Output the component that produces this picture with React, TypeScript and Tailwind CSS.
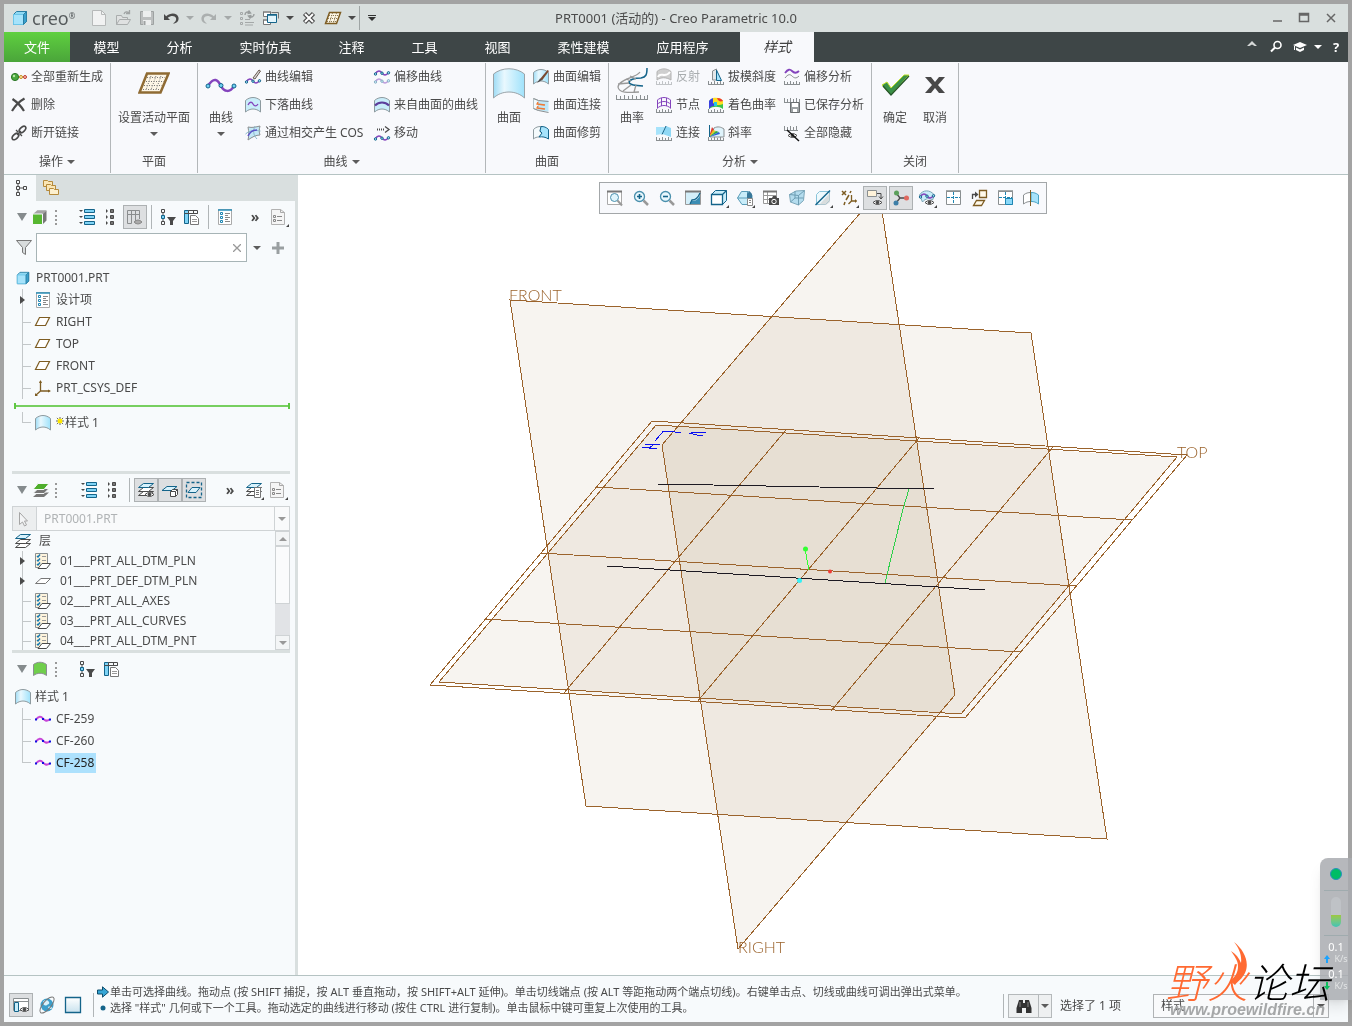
import type { ReactNode } from 'react';

const INK = '#4a4a4a';
const BLUE = '#14648a';
const SKY = '#a6e3fb';
const PURPLE = '#8444bd';
const BROWN = '#7d5c22';
const GRAY = '#8a8f91';
const DATUM = '#9b632c';

const Ruler = ({ y = 15 }: { y?: number }) => (
  <path d={`M0 ${y + 0.5}h16M.5 ${y}v-3M3.5 ${y}v-2M6.5 ${y}v-3M9.5 ${y}v-2M12.5 ${y}v-3M15.5 ${y}v-2`} stroke={GRAY} />
);

const Wave = ({ y = 0, color = PURPLE, dot = BLUE }: { y?: number; color?: string; dot?: string }) => (
  <g transform={`translate(0 ${y})`}>
    <path d="M1 4C4 0 6 .5 8 3S12 6 15 2" stroke={color} strokeWidth="1.5" />
    <circle cx="1.5" cy="4" r="1.2" fill={SKY} stroke={dot} />
    <circle cx="8" cy="3.2" r="1.2" fill={SKY} stroke={dot} />
    <circle cx="14.5" cy="2.8" r="1.2" fill={SKY} stroke={dot} />
  </g>
);

const Patch = ({ fill = SKY, stroke = '#8d9a9f' }: { fill?: string; stroke?: string }) => (
  <path d="M.5 3.5C5-.5 11-.5 15.5 3.5V15C11 11 5 11 .5 15Z" fill={fill} stroke={stroke} />
);

const Eye = ({ x = 6, y = 9 }: { x?: number; y?: number }) => (
  <g transform={`translate(${x} ${y})`}>
    <path d="M0 3.5Q4.5-.5 9 3.5Q4.5 7.5 0 3.5Z" fill="#fff" stroke={INK} />
    <circle cx="4.5" cy="3.5" r="1.8" fill={INK} />
  </g>
);

const Lens = ({ children }: { children?: ReactNode }) => (
  <>
    <path d="M10.5 10.5l4.5 4.5" stroke="#999" strokeWidth="2.5" />
    <circle cx="6.5" cy="6.5" r="5" fill="#e8f7fd" stroke="#4a90ad" strokeWidth="1.3" />
    {children}
  </>
);

const Layer = ({ y, fill = '#fff', stroke = INK }: { y: number; fill?: string; stroke?: string }) => (
  <path d={`M5.5 ${y}h10l-5 4h-10z`} fill={fill} stroke={stroke} />
);

const icons: Record<string, ReactNode> = {
  part: (
    <>
      <path d="M1.5 4.5l3-3h10v10l-3 3h-10z" fill="#8fd8f3" stroke="#2a7fa5" />
      <path d="M1.5 4.5h10v10h-10z" fill={SKY} stroke="#6cc5e8" />
      <path d="M11.5 4.5l3-3v10l-3 3z" fill="#3aa0cc" stroke="#2a7fa5" />
    </>
  ),
  file: (
    <>
      <path d="M1.5.5h9l4 4v11h-13z" fill="#f1f2f2" stroke="#b6b9b9" />
      <path d="M10.5.5v4h4" stroke="#b6b9b9" />
    </>
  ),
  open: (
    <>
      <path d="M1.5 14.5v-9h5l1 2h5v2M1.5 14.5l3-5h11l-3 5z" fill="#dfe1e1" stroke="#a9adad" />
      <path d="M9 4c1-2.5 3-2.5 5-1.5M14.5 0v3.5h-3.5" stroke="#a0a4a4" strokeWidth="1.3" />
    </>
  ),
  save: (
    <>
      <path d="M1.5 1.5h13v13h-13z" fill="#bcbfbf" stroke="#9ea2a2" />
      <path d="M4 1h8v6H4zM4 10h8v5H4z" fill="#eceeee" />
      <path d="M5.5 11v4" stroke="#9ea2a2" strokeWidth="2" />
    </>
  ),
  undo: <path d="M1 4v6h6L4.8 7.8C8 5 12 5.5 13 8c.6 2-.5 4-3 5.5 4 0 6-2.5 5.5-6C14.5 3 8 2 3.2 6.2z" fill={INK} />,
  redo: <path d="M15 4v6H9l2.2-2.2C8 5 4 5.5 3 8c-.6 2 .5 4 3 5.5-4 0-6-2.5-5.5-6C1.5 3 8 2 12.8 6.2z" fill="#abafaf" />,
  regen: (
    <>
      <path d="M1.5 2.5h2v2h-2zM1.5 7.5h2v2h-2zM1.5 12.5h2v2h-2zM6 9.5h5M6 12.5h9M6 15h8" stroke="#a4a8a8" />
      <path d="M6 5c0-3 3-4 5-2M9.5.5l2 2.5-3 .5M15 4c0 3-3 4-5 2M11.5 8.5L9.5 6l3-.5" stroke="#999d9d" strokeWidth="1.4" />
    </>
  ),
  windows: (
    <>
      <path d="M.5 1.5h7v5h-7zM.5 9.5h7v5h-7z" fill="#fff" stroke="#777" />
      <path d="M1 2h6M1 10h6" stroke="#999" strokeWidth="2" />
      <path d="M8.5 2.5h7v6" stroke="#777" />
      <path d="M4.5 4.5h9v8h-9z" fill="#e3f5fc" stroke={BLUE} />
      <path d="M4 5h10" stroke={BLUE} strokeWidth="1.5" />
    </>
  ),
  closeWin: (
    <>
      <path d="M3.5 3.5l9 9M12.5 3.5l-9 9" stroke={INK} strokeWidth="4.5" />
      <path d="M4 4l8 8M12 4l-8 8" stroke="#fff" strokeWidth="2" />
    </>
  ),
  plane: (
    <>
      <path d="M4.5 2.5h11l-4 11h-11z" fill="#fdf6e6" stroke={BROWN} strokeWidth="1.5" />
      <path d="M4 5.5h10M3 8.5h10M2 11.5h10M7.5 3l-3 10M11.5 3l-3 10" stroke="#8b7a55" strokeDasharray="1 1" />
    </>
  ),
  regenAll: (
    <>
      <circle cx="4" cy="8" r="3.6" fill="#4ba83f" stroke="#2b7626" />
      <circle cx="3" cy="7" r="1.2" fill="#b8e8a8" />
      <circle cx="10" cy="8" r="1.5" fill="#fff2b0" stroke="#c38b20" />
      <circle cx="14" cy="8" r="1.5" fill="#f8c3ba" stroke="#c0392b" />
    </>
  ),
  del: <path d="M1.5 2C6 5 10 9 13 14M13.5 1.5C9 4 4 9 1 14" stroke={INK} strokeWidth="2.2" />,
  unlink: (
    <>
      <ellipse cx="4.5" cy="11.5" rx="4" ry="2.3" transform="rotate(-45 4.5 11.5)" stroke={INK} strokeWidth="1.6" />
      <ellipse cx="11.5" cy="4.5" rx="4" ry="2.3" transform="rotate(-45 11.5 4.5)" stroke={INK} strokeWidth="1.6" />
      <path d="M6 10l4-4M5 5l2 2M9 9l2 2" stroke={INK} strokeWidth="1.3" />
    </>
  ),
  curveEdit: (
    <>
      <Wave y={9} />
      <path d="M8 9l6-8 1.5 1L10 10z" fill="#d8d8d8" stroke="#6a5a50" />
    </>
  ),
  drop: (
    <>
      <Patch fill="#c9edfa" />
      <path d="M3 8c2-4 4-3 5-1s3 3 5 0" stroke={PURPLE} strokeWidth="1.3" />
    </>
  ),
  cos: (
    <>
      <path d="M3 2c4 1 8 0 12-1-1 4-1 6 0 9-4 0-8 2-12 5 1-4 1-8 0-13z" fill="#c3e8f6" stroke={GRAY} />
      <path d="M.5 9C5 5 10 5 15.500 6M10 1c-2 4-2 9 2 13" stroke="#8bb8ca" />
      <path d="M3 11c2-4 5-6 9-6" stroke="#5b52c8" strokeWidth="1.5" />
    </>
  ),
  offset: (
    <>
      <Wave y={1} />
      <g opacity=".5"><Wave y={9} /></g>
    </>
  ),
  fromSurf: (
    <>
      <Patch fill="#c9edfa" />
      <path d="M1 8.5c4-4 10-4 14 0" stroke="#5d3f9c" strokeWidth="2" />
    </>
  ),
  move: (
    <>
      <Wave y={10} />
      <path d="M3 4.5h8" stroke={INK} strokeWidth="2" strokeDasharray="1 1" />
      <path d="M11 1.5l4 3-4 3" stroke={INK} strokeWidth="1.3" />
    </>
  ),
  surfEdit: (
    <>
      <Patch fill="url(#surfFill)" />
      <path d="M7 10l7.5-9L16 2 9 11.5z" fill="#7a4a30" />
      <path d="M4 14l3-4.5 2 1.5z" fill={INK} />
    </>
  ),
  surfConn: (
    <>
      <path d="M.5 1.5l5 2v10l-5-2z" fill="#f1fafd" stroke="#b5c2c6" />
      <path d="M5.5 3.5h10v11l-10-1z" fill="#bfe8f8" />
      <path d="M4 7l8 1M4 11l8 1M5 5l-1 2 7 1M5 9l-1 2 7 1" stroke="#ef7a35" strokeWidth="1.3" />
      <path d="M.5 1.5l5 2 10 1M.5 11.5l5 2 10 2" stroke={GRAY} />
    </>
  ),
  surfTrim: (
    <>
      <path d="M.5 4.5C3 2 5 1.5 8 1.5l-1 5 2 2-3 3.5c-2 0-4 .5-5.5 2z" fill="#f4fafc" stroke="#8d9a9f" />
      <path d="M8 1.5c3 0 5 .5 7.5 3V14c-3-2-6-2.5-9.5-2l3-4-2-2z" fill={SKY} stroke={BLUE} />
    </>
  ),
  reflect: (
    <>
      <path d="M1 2.5C5-1 11-1 15 2.5V11C10 8 5 8 1 11Z" fill="#cfcfcf" stroke="#b2b2b2" />
      <path d="M2 8c2-6 7 2 12-5" stroke="#fff" strokeWidth="2" />
      <g opacity=".5"><Ruler /></g>
    </>
  ),
  knot: (
    <>
      <path d="M1 3.5c4-4 10-4 14 0M1 7.5c4-4 10-4 14 0M1 11.5c4-4 10-4 14 0M1.5 3v8M5.5 1v8M10.5 1v8M14.5 3v8" stroke={PURPLE} />
      <Ruler />
    </>
  ),
  connect: (
    <>
      <path d="M0 2h9L6 9l-6 1z" fill={SKY} />
      <path d="M10 1l5 2v9L6.5 9z" fill="#8fd8f5" />
      <path d="M10 1L6 9.5" stroke={BLUE} />
      <Ruler />
    </>
  ),
  draft: (
    <>
      <path d="M4.5 11V2l4-2v11z" fill="#e3e7e9" stroke={GRAY} />
      <path d="M8.5 1l5 10.5h-5z" fill={SKY} stroke={BLUE} />
      <Ruler />
    </>
  ),
  shaded: (
    <>
      <path d="M1 4C5 0 11 0 15 4v8C11 9 5 9 1 12z" fill="#3cc24a" />
      <path d="M1 4c1.5-2 3-3 5-3v8c-2 0-4 1-5 3z" fill="#3a3fe0" />
      <path d="M5 1c4-1 8 0 10 3v3c-4 2-7 1-10-1z" fill="#ffdf20" />
      <path d="M9 1c3 0 5 1 6 3-3 1-5 0-6-3z" fill="#ef3b2d" />
      <path d="M6 5h3v4H6z" fill="#25c8e0" />
      <Ruler />
    </>
  ),
  slope: (
    <>
      <path d="M2 12L6 3c4-2 7-1 10 1v8z" fill="#dff3fb" stroke={GRAY} />
      <path d="M1 12L4 2l2 3z" fill="#e0382c" />
      <path d="M1 12l4-7 3 1z" fill="#e8c520" />
      <path d="M1 12l7-6 3 1z" fill="#2ba84a" />
      <path d="M1 12l10-5 1 2z" fill="#2b60d8" />
      <path d="M1.5 0v12" stroke={BLUE} />
      <Ruler />
    </>
  ),
  offAna: (
    <>
      <path d="M1 4c3-4 5-4 7-2s4 3 7 0" stroke={PURPLE} strokeWidth="1.8" />
      <path d="M1 9c3-4 5-4 7-2s4 3 7 0" stroke={GRAY} />
      <Ruler />
    </>
  ),
  savedAna: (
    <>
      <path d="M.5 1v4M3.5 2v3M6.5 1v4M9.5 2v3M12.5 1v4M15.5 2v3M0 5.5h7" stroke={GRAY} />
      <path d="M6.5 5.5h9v10h-9z" fill="#9ba0a2" stroke="#696d6f" />
      <path d="M8 6h6v4H8zM9 12h4v3H9z" fill="#fff" />
    </>
  ),
  hideAll: (
    <>
      <path d="M.5 1v4M3.5 2v3M6.5 1v4M9.5 2v3M12.5 1v4M0 5.5h14" stroke={GRAY} />
      <Eye x={4} y={7} />
      <path d="M3 5l12 11" stroke="#111" strokeWidth="1.5" />
    </>
  ),
  // view toolbar
  refit: (
    <>
      <path d="M.5 1.5h14v13H.5z" fill="#fff" stroke="#aaa" />
      <path d="M0 1.5h15" stroke="#777" strokeWidth="2" />
      <circle cx="7.5" cy="7.5" r="4" fill="#e0f5fc" stroke="#4a90ad" />
      <path d="M10.5 10.5l4.5 5" stroke="#999" strokeWidth="2" />
    </>
  ),
  zoomIn: <Lens><path d="M4 6.5h5M6.5 4v5" stroke={BLUE} strokeWidth="1.6" /></Lens>,
  zoomOut: <Lens><path d="M4 6.5h5" stroke={BLUE} strokeWidth="1.6" /></Lens>,
  repaint: (
    <>
      <path d="M.5 1.5h15v13H.5z" fill="#d3eef9" stroke="#999" />
      <path d="M15 5C13 10 10 11 7 11l-2 3h10z" fill="#3b8db4" />
      <path d="M15 3c-2 5-4 7-8 7l-2 4" stroke={BLUE} strokeWidth="1.3" />
      <path d="M0 1.5h16" stroke="#777" strokeWidth="2" />
    </>
  ),
  box: (
    <>
      <path d="M.5 4.5l4-4h11v10l-4 4H.5z" fill="#c9edfa" stroke={BLUE} />
      <path d="M.5 4.5h11v10H.5zM11.5 4.5l4-4" fill="#fff" stroke={BLUE} strokeWidth="1.3" />
    </>
  ),
  saved: (
    <>
      <path d="M.5 8l4-6.5h7l3.5 4v5l-3 4h-7z" fill="#c8ecf9" stroke="#5a9cb8" />
      <path d="M.5 8h10M10.5 2v10" stroke="#5a9cb8" />
      <path d="M10 8V4l2.5-3L15 4v4z" fill="#38789a" />
      <path d="M10.5 8.5h5v7h-5z" fill="#fff" stroke="#888" />
      <path d="M12 10.5h2M12 12.5h2" stroke="#888" />
    </>
  ),
  viewMgr: (
    <>
      <path d="M.5 1.5h13v12H.5zM.5 5.5h13M.5 9.5h13M4.5 1.5v12" fill="#fff" stroke="#999" />
      <path d="M0 1.5h14" stroke="#777" strokeWidth="2" />
      <path d="M6 8h3l1-2h3l1 2h2v7H6z" fill={INK} />
      <circle cx="11" cy="11.5" r="2.2" fill={INK} stroke="#fff" />
    </>
  ),
  persp: (
    <>
      <path d="M.5 4.5L7 1l8.5-.5-1 10-5 4.5-8-3z" fill="#b4dcee" stroke="#7ba6b9" />
      <path d="M.5 4.5l9 1 6-5M9.5 5.5V15M1.5 12L6 8h8.5M6 8V1" stroke="#6d9db3" />
    </>
  ),
  section: (
    <>
      <path d="M1.5 4.5l3-3h10v9l-4 4h-9z" fill="#eef9fd" stroke="#8ac4da" />
      <path d="M4 15L15 3v9l-4 3z" fill="#c9c9c9" opacity=".6" />
      <path d="M.5 15L15 .5" stroke={BLUE} strokeWidth="1.5" />
    </>
  ),
  datums: (
    <>
      <path d="M1 1l4 4M5 1L1 5M10 1l-1 2M8 5L5 10M4 12l-1 3" stroke={BROWN} strokeWidth="1.5" />
      <path d="M10.5 5v6h5M10.5 11l-3 3" stroke={BROWN} strokeWidth="1.3" />
      <path d="M14 9l2 2-2 2z" fill={BROWN} />
    </>
  ),
  annot: (
    <>
      <path d="M.5.5h9v6h-9z" fill="#fff3da" stroke={GRAY} />
      <path d="M10 3.5h4v5M12 6.5l2 2.5 2-2.5" stroke={INK} />
      <Eye x={6} y={9} />
    </>
  ),
  spin: (
    <>
      <path d="M3.5 3.5L7 8l-4 5M7 8h6" stroke={INK} strokeWidth="1.3" />
      <circle cx="3.5" cy="3" r="2.5" fill="#5ba05b" />
      <circle cx="3" cy="13" r="2.5" fill="#3d7fa8" />
      <circle cx="13.5" cy="8" r="2.5" fill="#e06a60" />
    </>
  ),
  styleDisp: (
    <>
      <path d="M.5 5C4-.5 11-.5 15.500 5l-2 5c-3-2-7-2-10 2z" fill="#c9edfa" stroke="#7aa5b7" />
      <Wave y={3} />
      <Eye x={6} y={9} />
    </>
  ),
  quad: (
    <>
      <path d="M1.5 1.5h14v13h-14z" fill="#fff" stroke={GRAY} />
      <path d="M1 1h15" stroke={GRAY} strokeWidth="1.5" />
      <path d="M8.5 2v12M2 7.5h13" stroke="#1e86b3" strokeDasharray="3 1" />
    </>
  ),
  orient: (
    <>
      <path d="M8.5.5h7v7h-7zM5.5 10.5h8l-3 5h-8z" fill="#fff9ea" stroke={BROWN} strokeWidth="1.3" />
      <path d="M1.5 9V4.5h4" stroke={INK} strokeWidth="1.3" />
      <path d="M4 1.5l3.5 3L4 7.5z" fill={INK} />
    </>
  ),
  quadOne: (
    <>
      <path d="M1.5 1.5h14v13h-14z" fill="#fff" stroke={GRAY} />
      <path d="M1 1h15" stroke={GRAY} strokeWidth="1.5" />
      <path d="M8.5 2v12M2 7.5h13" stroke="#1e86b3" strokeDasharray="3 1" />
      <path d="M8.5 8.5h7v6h-7z" fill="#8ad8f8" stroke="#1e86b3" />
    </>
  ),
  symm: (
    <>
      <path d="M.5 5C3 3 5 2.5 8 2.5v9c-3 0-5 .5-7.5 2.5z" fill="#fff" stroke={GRAY} />
      <path d="M8 2.5c3 0 5 .5 7.5 2.5v9c-2.5-2-4.5-2.5-7.5-2.5z" fill={SKY} stroke="#4aa3c4" />
      <path d="M7.5 0v16" stroke={BROWN} />
    </>
  ),
  // panels
  treeTab: <path d="M4.5.5h3v3h-3zM4.5 6.5h3v3h-3zM4.5 12.5h3v3h-3zM11.5 6.5h3v3h-3zM6 3.5v3M6 9.5v3M7.5 8h4" stroke={INK} />,
  folders: (
    <>
      <path d="M.5.5h4l1 1h4v5h-9z" fill="#fbe6b4" stroke="#b58a3c" />
      <path d="M3.5 4.5h4l1 1h4v5h-9z" fill="#fbe6b4" stroke="#b58a3c" />
      <path d="M6.5 8.500h4l1 1h4v5h-9z" fill="#fdf0cf" stroke="#b58a3c" />
    </>
  ),
  greenPart: (
    <>
      <path d="M3.5 1.5h10v10l-4 4v-10z" fill="#777" />
      <path d="M3.5 2h10l-4 3.5H-.5z" fill="#a5a5a5" />
      <path d="M-.5 5H9.500v10.5H-.5z" fill="#57b731" stroke="#f7fafc" />
    </>
  ),
  list: (
    <>
      <path d="M0 1h4L2 3zM0 7h4L2 9zM0 13h4l-2 2z" fill={INK} />
      <path d="M5.5.5h10v3h-10zM5.5 6.5h10v3h-10zM5.5 12.5h10v3h-10z" fill="#7fd3f5" stroke={BLUE} />
    </>
  ),
  listSmall: (
    <>
      <path d="M3 0l2 2-2 2zM3 6l2 2-2 2zM3 12l2 2-2 2z" fill={INK} />
      <path d="M7.5.5h3v3h-3zM7.5 6.5h3v3h-3zM7.5 12.5h3v3h-3z" fill="#777" stroke={INK} />
    </>
  ),
  tableEye: (
    <>
      <path d="M.5 1.5h12v4H.5zM.5 5.5h4v9h-4zM4.5 1.5v4M8.5 1.5v13M12.5 5v5" stroke="#8a8d8e" />
      <path d="M7 13q4-4 8 0-4 4-8 0z" fill="#aaa" stroke="#888" />
    </>
  ),
  treeFilter: (
    <>
      <path d="M1.5.5h3v3h-3zM1.5 12.5h3v3h-3zM3 3.5v3M3 9.5v3" stroke={INK} />
      <path d="M1.5 6.5h3v3h-3z" fill="#7fd3f5" stroke={BLUE} />
      <path d="M7 8h9l-3 4v4h-3v-4z" fill={INK} />
    </>
  ),
  tableCols: (
    <>
      <path d="M.5 1.5h4v13h-4z" fill="#7fd3f5" stroke={BLUE} />
      <path d="M4.5 1.5h9v3h-9zM9.5 1.5v3M.5 4.5h13" stroke={INK} />
      <path d="M6.5 6.5h5l3 3v6h-8z" fill="#fff" stroke="#777" />
      <path d="M8 10.5h5M8 12.5h5" stroke="#999" />
    </>
  ),
  design: (
    <>
      <path d="M1.5.5h13v15h-13z" fill="#fff" stroke="#aaa" />
      <path d="M1 1h14" stroke="#2a8fb8" strokeWidth="1.5" />
      <path d="M3.5 3.5h2v2h-2zM3.5 7.5h2v2h-2zM3.5 11.5h2v2h-2z" stroke="#1e86b3" />
      <path d="M8 4.5h5M8 6.5h3M8 8.5h5M8 10.5h3M8 12.5h5" stroke="#888" />
    </>
  ),
  sheet: (
    <>
      <path d="M.5.5h9l4 3v12H.5z" fill="#f5f5f5" stroke="#b2b2b2" />
      <path d="M9.5.5v3h4" stroke="#a9a9a9" />
      <path d="M6 7.5h5M6 11.5h5" stroke="#888" />
      <path d="M2.5 6.5h2v2h-2zM2.5 10.5h2v2h-2z" stroke="#888" />
    </>
  ),
  funnel: <path d="M.5.5h15l-6 7v7l-3-2v-5z" fill="#d8dcdd" stroke="#777" />,
  datum: <path d="M4.5 3.5h10l-4 8H.5z" fill="#fff" stroke={BROWN} strokeWidth="1.2" />,
  csys: (
    <>
      <path d="M5.5 1v10h9M5.5 11L1 15" stroke={BROWN} strokeWidth="1.3" />
      <path d="M4 3l1.5-3L7 3zM13 9.5l3 1.5-3 1.5zM0 16v-3l3 3z" fill={BROWN} />
    </>
  ),
  surf: <Patch fill="url(#surfFill)" />,
  greenSurf: <path d="M.5 3.5c4-3 9-3 13 0v11c-4-3-9-3-13 0z" fill="#6fce4c" stroke={GRAY} />,
  greenLayers: (
    <>
      <path d="M5 10.5h11l-5 4.5H0z" fill="#777" />
      <path d="M5 6.5h11l-5 5H0z" fill="#777" stroke="#f6f9fa" />
      <path d="M5 1.5h11l-5 6H0z" fill="#4fae2c" stroke="#f6f9fa" />
    </>
  ),
  layers: (
    <>
      <Layer y={10.5} />
      <Layer y={6.5} />
      <Layer y={1.5} fill="#d8f2fc" stroke={BLUE} />
    </>
  ),
  layersEye: (
    <>
      <Layer y={9.5} />
      <Layer y={5.5} />
      <Layer y={1.5} fill="#d8f2fc" stroke={BLUE} />
      <Eye x={7} y={9} />
    </>
  ),
  layerBox: (
    <>
      <path d="M5 4.5h10l-5 4H0z" fill="#d8f2fc" stroke={BLUE} />
      <path d="M8.5 9.5l2-2h5v5l-2 2h-5zM8.5 9.5h5v5M13.5 9.5l2-2" fill="#fff" stroke={INK} />
    </>
  ),
  layerSel: (
    <>
      <path d="M.5.5h15v15H.5z" stroke={BLUE} strokeWidth="1.3" strokeDasharray="3 2" />
      <path d="M6 5.5h8l-4 5H2z" fill="#d8f2fc" stroke={BLUE} />
    </>
  ),
  layersDoc: (
    <>
      <Layer y={9.5} />
      <Layer y={5.5} />
      <Layer y={1.5} fill="#d8f2fc" stroke={BLUE} />
      <path d="M8.5 5.5h6v10h-6z" fill="#fff" stroke="#777" />
      <path d="M10 8.5h3M10 10.5h3M10 12.5h3" stroke="#777" />
    </>
  ),
  cursor: <path d="M2.5 1.5v12l3-2.5 2 4 2-1-2-4h3z" fill="#f3f4f5" stroke="#a5a5a5" />,
  layerItem: (
    <>
      <path d="M.5.5h12v14H.5z" fill="#fdf3dc" stroke={GRAY} />
      <path d="M2 3l1 1 2-2.5M2 7l1 1 2-2.5M2 11l1 1 2-2.5" stroke="#1578b0" strokeWidth="1.5" />
      <path d="M7 3.5h4M7 7.5h4" stroke="#999" />
      <path d="M7 10.5h8.5l-4 5H3z" fill="#fff" stroke={INK} />
    </>
  ),
  layerFlat: <path d="M6 5.5h9.5l-5 5H.5z" fill="#fff" stroke="#777" />,
  curveItem: (
    <>
      <path d="M1 8.5C3.500 5 6 5 8 7.5s4 3 6.5 1" stroke="#c646d8" strokeWidth="2" />
      <path d="M0 7.500h2v2H0zM7 7h2v2H7zM14 7.500h2v2h-2z" fill="#1010e0" />
    </>
  ),
  panelEye: (
    <>
      <path d="M.5 1.5h15v12H.5z" fill="#fff" stroke={GRAY} />
      <path d="M1 4.5h14" stroke={GRAY} />
      <path d="M1.5 5.5h4v9h-4z" fill="#c9edfa" stroke={BLUE} />
      <Eye x={7} y={9} />
    </>
  ),
  globe: (
    <>
      <circle cx="8" cy="8" r="6.5" fill="#3b9fcb" />
      <path d="M4 5c2-3 5-2 6 0s-1 2-2 3-4 1-4-3zM9 10c2-1 4 0 4 1s-3 2-4-1z" fill="#d9f2fb" />
      <ellipse cx="8" cy="8" rx="10" ry="4" transform="rotate(-50 8 8)" stroke="#777" />
    </>
  ),
  blank: <path d="M.5.5h15v15H.5z" fill="url(#blankFill)" stroke={BLUE} strokeWidth="1.3" />,
  binoc: (
    <>
      <path d="M3 2h4v3h2V2h4l2.5 8v5H10v-5H6v5H.5v-5z" fill="#333" />
      <path d="M4 4v5M12 4v5" stroke="#888" />
    </>
  ),
  search: (
    <>
      <circle cx="9.5" cy="6" r="3.5" stroke="#fff" strokeWidth="1.6" />
      <path d="M7 8.5l-4 4" stroke="#fff" strokeWidth="2" />
    </>
  ),
  learn: (
    <>
      <path d="M1 6L8 3l7 3-7 3z" fill="#fff" />
      <path d="M4 8.5V11l4 2 4-2V8.5L8 10.5z" fill="#fff" />
      <path d="M2.5 7v4" stroke="#fff" />
    </>
  ),
};

const Icon = ({ name, className = 'size-4' }: { name: string; className?: string }) => (
  <svg viewBox="0 0 16 16" fill="none" className={`${className} shrink-0 overflow-visible`} aria-hidden="true">
    {icons[name]}
  </svg>
);

const Caret = ({ className = 'text-[#5c5c5c]' }: { className?: string }) => (
  <svg viewBox="0 0 8 4" className={`h-1 w-2 shrink-0 ${className}`} aria-hidden="true">
    <path d="M0 0h8L4 4z" fill="currentColor" />
  </svg>
);

const Tool = ({ name, label, on = false, corner = false }: { name: string; label: string; on?: boolean; corner?: boolean }) => (
  <button
    type="button"
    aria-label={label}
    className={`relative flex h-6 w-6 shrink-0 items-center justify-center ${on ? 'border border-[#adb1b3] bg-[#dddfe1]' : ''}`}
  >
    <Icon name={name} />
    {corner && (
      <svg viewBox="0 0 3 3" className="absolute right-0.5 bottom-0.5 size-[3px]" aria-hidden="true">
        <path d="M3 0v3H0z" fill="#444" />
      </svg>
    )}
  </button>
);

/* ---------- Title bar ---------- */

const QuickCaret = ({ label, dim = false }: { label: string; dim?: boolean }) => (
  <button type="button" aria-label={label} className="flex h-6 w-[14px] items-center justify-center">
    <Caret className={dim ? 'text-[#a5a9a9]' : 'text-[#4a4a4a]'} />
  </button>
);

const TitleBar = () => (
  <header className="grid h-7 shrink-0 grid-cols-[1fr_auto_1fr] items-center bg-[#d9dfde]">
    <div className="flex items-center">
      <div className="flex w-[83px] items-center gap-1 pl-2">
        <Icon name="part" />
        <span className="flex text-lg leading-6 text-[#565b5d]">
          creo<span className="text-[8px] leading-5">®</span>
        </span>
      </div>
      <Tool name="file" label="新建" />
      <Tool name="open" label="打开" />
      <Tool name="save" label="保存" />
      <Tool name="undo" label="撤消" />
      <QuickCaret label="撤消列表" dim />
      <Tool name="redo" label="重做" />
      <QuickCaret label="重做列表" dim />
      <Tool name="regen" label="重新生成" />
      <Tool name="windows" label="窗口" />
      <QuickCaret label="窗口列表" />
      <Tool name="closeWin" label="关闭窗口" />
      <Tool name="plane" label="活动平面" />
      <QuickCaret label="活动平面列表" />
      <span className="h-6 w-px bg-[#9fa5a5]" />
      <button type="button" aria-label="自定义" className="flex h-6 w-6 flex-col items-center justify-center gap-px">
        <span className="h-px w-2 bg-[#333]" />
        <Caret className="text-[#333]" />
      </button>
    </div>
    <h1 className="text-[13px] leading-5 text-[#4b4b4b]">PRT0001 (活动的) - Creo Parametric 10.0</h1>
    <div className="flex items-center justify-end pr-1">
      {[
        { label: '最小化', d: 'M4 11h9' },
        { label: '最大化', d: 'M3.5 3.5h9v8h-9zM3.5 5h9' },
        { label: '关闭', d: 'M4 4l8 8M12 4l-8 8' },
      ].map((b) => (
        <button key={b.label} type="button" aria-label={b.label} className="flex w-[27px] justify-center">
          <svg viewBox="0 0 16 16" className="size-4" fill="none" stroke="#666" strokeWidth="1.5" aria-hidden="true">
            <path d={b.d} />
          </svg>
        </button>
      ))}
    </div>
  </header>
);

/* ---------- Ribbon ---------- */

const tabs = ['模型', '分析', '实时仿真', '注释', '工具', '视图', '柔性建模', '应用程序'];

const TabBar = () => (
  <nav className="flex h-[30px] shrink-0 items-stretch bg-[#3e4647] text-[13px] leading-5 text-white">
    <button type="button" className="w-[66px] bg-linear-to-b from-[#5fd03f] to-[#4aa53a]">文件</button>
    {tabs.map((t) => (
      <button key={t} type="button" className={t.length > 2 ? 'w-[99px]' : 'w-[73px]'}>
        {t}
      </button>
    ))}
    <button type="button" className="ml-2 w-[74px] bg-[#f8f9fc] text-sm text-[#444] italic">样式</button>
    <div className="ml-auto flex items-center">
      <button type="button" aria-label="折叠功能区" className="flex h-5 w-6 justify-center pt-1">
        <svg viewBox="0 0 10 6" className="h-1.5 w-[10px]" aria-hidden="true">
          <path d="M5 0l5 5H7.500L5 3.500 2.500 5H0z" fill="#d5d8d8" />
        </svg>
      </button>
      <Tool name="search" label="搜索" />
      <Tool name="learn" label="学习" />
      <button type="button" aria-label="学习列表" className="flex w-3 justify-center">
        <Caret className="text-white" />
      </button>
      <button type="button" className="w-6 font-bold">?</button>
    </div>
  </nav>
);

const Group = ({ label, menu = false, className, children }: { label: string; menu?: boolean; className: string; children: ReactNode }) => (
  <section className={`my-px flex shrink-0 flex-col border-r border-[#b3b7b9] ${className}`}>
    <div className="flex h-[84px]">{children}</div>
    <div className="flex flex-1 items-center justify-center gap-1 pt-1">
      {label}
      {menu && <Caret />}
    </div>
  </section>
);

const Column = ({ items, className = '' }: { items: [string, string, boolean?][]; className?: string }) => (
  <div className={`flex shrink-0 flex-col ${className}`}>
    {items.map(([icon, text, off]) => (
      <button
        key={text}
        type="button"
        disabled={off}
        className={`flex h-7 items-center gap-1 whitespace-nowrap ${off ? 'text-[#a9adaf]' : ''}`}
      >
        <Icon name={icon} />
        {text}
      </button>
    ))}
  </div>
);

const Big = ({ label, menu = false, className, children }: { label: string; menu?: boolean; className: string; children: ReactNode }) => (
  <button type="button" className={`flex shrink-0 flex-col items-center pt-[5px] ${className}`}>
    <svg viewBox="0 0 32 32" fill="none" className="size-8" aria-hidden="true">
      {children}
    </svg>
    <span className="mt-2 mb-1 leading-5 whitespace-nowrap">{label}</span>
    {menu && <Caret />}
  </button>
);

const Ribbon = () => (
  <div className="flex h-[113px] shrink-0 overflow-hidden border-b border-[#b5c3c3] bg-[#f8f9fc]">
    <Group label="操作" menu className="w-[107px]">
      <Column className="pl-[7px]" items={[['regenAll', '全部重新生成'], ['del', '删除'], ['unlink', '断开链接']]} />
    </Group>
    <Group label="平面" className="w-[87px]">
      <Big label="设置活动平面" menu className="w-full">
        <path d="M9 5.5h21.5l-8 19H1.5z" fill="#fdf6e6" stroke="#8f6b33" strokeWidth="2.5" />
        <path d="M9 9.5h18M8 13.5h18M6 17.5h18M5 21.5h17M13 8l-5 14M18 8l-5 14M23 8l-5 14" stroke="#777" strokeDasharray="1 1.5" />
      </Big>
    </Group>
    <Group label="曲线" menu className="w-[288px]">
      <Big label="曲线" menu className="ml-[7px] w-8">
        <path d="M3 18C9 8 13 12 16 18s9 7 13 0" stroke={PURPLE} strokeWidth="2.5" />
        <circle cx="3" cy="18" r="2" fill="#6fd0f3" stroke={BLUE} />
        <circle cx="16" cy="17.5" r="2" fill="#6fd0f3" stroke={BLUE} />
        <circle cx="29" cy="18" r="2" fill="#6fd0f3" stroke={BLUE} />
      </Big>
      <Column className="ml-2 w-[129px]" items={[['curveEdit', '曲线编辑'], ['drop', '下落曲线'], ['cos', '通过相交产生 COS']]} />
      <Column items={[['offset', '偏移曲线'], ['fromSurf', '来自曲面的曲线'], ['move', '移动']]} />
    </Group>
    <Group label="曲面" className="w-[123px]">
      <Big label="曲面" className="ml-[7px] w-8">
        <path d="M.5 6C9-1 23-1 31.5 6v24C23 22 9 22 .5 30z" fill="url(#surfFill)" stroke="#9aa3a8" />
      </Big>
      <Column className="ml-2" items={[['surfEdit', '曲面编辑'], ['surfConn', '曲面连接'], ['surfTrim', '曲面修剪']]} />
    </Group>
    <Group label="分析" menu className="w-[263px]">
      <Big label="曲率" className="ml-[7px] w-8">
        <path d="M31 0c0 7-1 9-6 10-7 0-12 2-12 4.500 1 2.500 6 3 14 3.500" stroke={BLUE} strokeWidth="1.5" />
        <path d="M24 4C20 10 3 11 2 19c1 6 10 6 21 5M10 11l5 2M2 16l11-1M7 23l8-6M18 24l2-7M14 8l6 3" stroke="#999" strokeWidth="1.3" />
        <path d="M0 31.5h32M.5 31v-4M4.5 31v-3M8.5 31v-4M12.5 31v-3M16.5 31v-4M20.5 31v-3M24.5 31v-4M28.5 31v-3M31.5 31v-4" stroke={GRAY} />
      </Big>
      <Column className="ml-2 w-[52px]" items={[['reflect', '反射', true], ['knot', '节点'], ['connect', '连接']]} />
      <Column className="w-[76px]" items={[['draft', '拔模斜度'], ['shaded', '着色曲率'], ['slope', '斜率']]} />
      <Column items={[['offAna', '偏移分析'], ['savedAna', '已保存分析'], ['hideAll', '全部隐藏']]} />
    </Group>
    <Group label="关闭" className="w-[87px]">
      <Big label="确定" className="ml-[3px] w-10">
        <path d="M3 17l5-3 4 6L25 7h5L12 27z" fill="#3a9148" stroke="#bfe02a" />
        <path d="M4 18l8 9L30 8" stroke="#24552c" strokeWidth="1.3" />
      </Big>
      <Big label="取消" className="w-10">
        <path d="M6 9h6l4 5 4-5h6l-7 8 7 8h-6l-4-5-4 5H6l7-8z" fill="#484848" />
      </Big>
    </Group>
  </div>
);

/* ---------- Sidebar ---------- */

const Bar = () => <span className="mx-1 h-6 w-px shrink-0 bg-[#b0b5b7]" />;

const PanelHead = ({ icon, label }: { icon: string; label: string }) => (
  <div className="flex w-[68px] shrink-0 items-center pl-[13px]">
    <button type="button" aria-label={label} className="flex w-4 items-center">
      <svg viewBox="0 0 10 8" className="h-2 w-[10px]" aria-hidden="true">
        <path d="M0 0h10L5 8z" fill="#858b8d" />
      </svg>
    </button>
    <Icon name={icon} />
    <span className="ml-1.5 h-[15px] border-l-2 border-dotted border-[#999]" />
  </div>
);

type BranchKind = 'mid' | 'last' | 'open';

const Branch = ({ kind }: { kind: BranchKind }) => {
  if (kind === 'last') {
    return <span className="mr-1 h-1/2 w-[9px] shrink-0 self-start border-b border-l border-[#c3c7c9]" />;
  }
  return (
    <span className="relative flex w-[13px] shrink-0 items-center self-stretch border-l border-[#c3c7c9]">
      {kind === 'mid' && <span className="h-px w-2 bg-[#c3c7c9]" />}
      {kind === 'open' && (
        <svg viewBox="0 0 5 8" className="absolute -left-[3px] h-2 w-[5px]" aria-hidden="true">
          <path d="M0 0l5 4-5 4z" fill="#4a4a4a" />
        </svg>
      )}
    </span>
  );
};

const TreeRow = ({ icon, text, kind, selected = false }: { icon: string; text: ReactNode; kind: BranchKind; selected?: boolean }) => (
  <li className="flex h-[22px] items-center pl-[18px]">
    <Branch kind={kind} />
    <Icon name={icon} />
    <span className={`ml-1 pl-px leading-5 ${selected ? 'bg-[#ade1fd] pr-0.5 text-[#222]' : ''}`}>{text}</span>
  </li>
);

const modelRows: [string, string, BranchKind][] = [
  ['design', '设计项', 'open'],
  ['datum', 'RIGHT', 'mid'],
  ['datum', 'TOP', 'mid'],
  ['datum', 'FRONT', 'mid'],
  ['csys', 'PRT_CSYS_DEF', 'mid'],
];

const layerRows: [string, string, BranchKind][] = [
  ['layerItem', '01___PRT_ALL_DTM_PLN', 'open'],
  ['layerFlat', '01___PRT_DEF_DTM_PLN', 'open'],
  ['layerItem', '02___PRT_ALL_AXES', 'mid'],
  ['layerItem', '03___PRT_ALL_CURVES', 'mid'],
  ['layerItem', '04___PRT_ALL_DTM_PNT', 'mid'],
];

const ModelPanel = () => (
  <section className="flex h-[270px] shrink-0 flex-col">
    <div className="flex h-8 shrink-0 items-center">
      <PanelHead icon="greenPart" label="模型树" />
      <div className="flex flex-1 items-center pl-[3px]">
        <Tool name="list" label="全部展开" />
        <Tool name="listSmall" label="全部折叠" />
        <Tool name="tableEye" label="显示列" on />
        <Bar />
        <Tool name="treeFilter" label="树过滤器" />
        <Tool name="tableCols" label="树列" />
        <Bar />
        <Tool name="design" label="设计项" />
      </div>
      <button type="button" className="w-6 text-sm leading-5 font-bold">»</button>
      <Tool name="sheet" label="设置" corner />
      <span className="w-1" />
    </div>
    <div className="flex h-[29px] shrink-0 items-center pl-3">
      <Icon name="funnel" />
      <div className="ml-1 flex h-[29px] flex-1 items-center border border-[#a7b4b6] bg-white">
        <input type="text" aria-label="过滤" className="min-w-0 flex-1 px-2 outline-none" />
        <button type="button" aria-label="清除" className="flex w-[18px] justify-center">
          <svg viewBox="0 0 8 8" className="size-2" aria-hidden="true">
            <path d="M0 0l8 8M8 0L0 8" stroke="#999" strokeWidth="1.3" />
          </svg>
        </button>
      </div>
      <button type="button" aria-label="过滤列表" className="flex w-5 justify-center"><Caret /></button>
      <button type="button" aria-label="添加" className="mr-1.5 flex w-[22px] justify-center">
        <svg viewBox="0 0 12 12" className="size-3" aria-hidden="true">
          <path d="M4.5 0h3v4.5H12v3H7.5V12h-3V7.5H0v-3h4.5z" fill="#9a9fa1" />
        </svg>
      </button>
    </div>
    <ul className="mt-[5px]">
      <li className="flex h-[22px] items-center gap-1.5 pl-3">
        <Icon name="part" className="size-[14px]" />
        PRT0001.PRT
      </li>
      {modelRows.map(([icon, text, kind]) => (
        <TreeRow key={text} icon={icon} text={text} kind={kind} />
      ))}
    </ul>
    <div className="mt-1 mr-[5px] ml-[10px] flex h-1.5 items-center border-x-2 border-[#5fc744]">
      <span className="h-0.5 w-full bg-[#77cf60]" />
    </div>
    <ul className="mt-[3px]">
      <TreeRow
        icon="surf"
        kind="last"
        text={
          <span className="flex items-start gap-px">
            <svg viewBox="0 0 9 9" className="mt-1 size-2" aria-hidden="true">
              <path d="M4.5 0v9M0 4.5h9M1 1l7 7M8 1L1 8" stroke="#555" />
              <path d="M2 2h5v5H2z" fill="#ffe800" />
            </svg>
            样式 1
          </span>
        }
      />
    </ul>
  </section>
);

const ScrollCap = ({ up = false }: { up?: boolean }) => (
  <button type="button" aria-label={up ? '向上滚动' : '向下滚动'} className="flex h-[15px] w-full items-center justify-center border border-[#cfd3d5] bg-[#f3f5f6]">
    <Caret className={up ? 'rotate-180 text-[#999]' : 'text-[#999]'} />
  </button>
);

const LayerPanel = () => (
  <section className="mr-[5px] ml-2 flex shrink-0 flex-col border-t-3 border-[#d9dfdf]">
    <div className="-ml-2 flex h-8 items-center">
      <PanelHead icon="greenLayers" label="层树" />
      <div className="flex flex-1 items-center pl-[5px]">
        <Tool name="list" label="全部展开" />
        <Tool name="listSmall" label="全部折叠" />
        <Bar />
        <Tool name="layersEye" label="显示层" on />
        <Tool name="layerBox" label="隔离层" on />
        <Tool name="layerSel" label="选定层" on />
      </div>
      <button type="button" className="w-6 text-sm leading-5 font-bold">»</button>
      <Tool name="layersDoc" label="层" corner />
      <Tool name="sheet" label="设置" corner />
    </div>
    <div className="relative flex h-[25px] border border-[#cfd3d5]">
      <span className="flex w-6 shrink-0 items-center justify-center border-r border-[#cfd3d5] bg-[#eceeef]">
        <Icon name="cursor" />
      </span>
      <select disabled aria-label="活动模型" className="flex-1 appearance-none bg-[#f9fafb] px-[7px] leading-5 text-[#b0b3b5] opacity-100">
        <option>PRT0001.PRT</option>
      </select>
      <span className="pointer-events-none absolute inset-y-0 right-0 flex w-[15px] items-center justify-center border-l border-[#cfd3d5]">
        <Caret className="text-[#999]" />
      </span>
    </div>
    <div className="-ml-2 flex h-[119px] overflow-hidden">
      <ul className="flex-1">
        <li className="flex h-5 items-center gap-2 pl-[11px]">
          <Icon name="layers" />
          层
        </li>
        {layerRows.map(([icon, text, kind]) => (
          <li key={text} className="flex h-5 items-center pl-[18px]">
            <Branch kind={kind} />
            <Icon name={icon} />
            <span className="ml-[9px] leading-5 whitespace-nowrap">{text}</span>
          </li>
        ))}
      </ul>
      <div className="flex w-[15px] flex-col bg-[#e1e3e6]">
        <ScrollCap up />
        <span className="h-[58px] border border-[#cfd3d5] bg-[#fafbfc]" />
        <span className="flex-1" />
        <ScrollCap />
      </div>
    </div>
  </section>
);

const StylePanel = () => (
  <section className="mr-[5px] ml-2 border-t-3 border-[#d9dfdf]">
    <div className="-ml-2 flex h-8 items-center">
      <PanelHead icon="greenSurf" label="样式树" />
      <div className="flex items-center gap-px pl-[3px]">
        <Tool name="treeFilter" label="树过滤器" />
        <Tool name="tableCols" label="树列" />
      </div>
    </div>
    <ul className="-ml-2 pt-px">
      <li className="flex h-[22px] items-center gap-1 pl-[11px]">
        <Icon name="surf" />
        样式 1
      </li>
      <TreeRow icon="curveItem" text="CF-259" kind="mid" />
      <TreeRow icon="curveItem" text="CF-260" kind="mid" />
      <TreeRow icon="curveItem" text="CF-258" kind="last" selected />
    </ul>
  </section>
);

const Sidebar = () => (
  <aside className="flex w-[294px] shrink-0 flex-col overflow-hidden border-r-3 border-[#d9dfdf] bg-[#f7fafc]">
    <div className="flex h-[26px] shrink-0 bg-[#d9dfdf]">
      <button type="button" aria-label="模型树" className="flex w-8 items-center justify-center bg-[#f7fafc]">
        <Icon name="treeTab" />
      </button>
      <button type="button" aria-label="文件夹浏览器" className="flex w-[30px] items-center justify-center">
        <Icon name="folders" />
      </button>
    </div>
    <ModelPanel />
    <LayerPanel />
    <StylePanel />
  </aside>
);

/* ---------- Graphics area ---------- */

const viewTools: { name: string; label: string; on?: boolean; corner?: boolean }[] = [
  { name: 'refit', label: '重新调整' },
  { name: 'zoomIn', label: '放大' },
  { name: 'zoomOut', label: '缩小' },
  { name: 'repaint', label: '重画' },
  { name: 'box', label: '显示样式', corner: true },
  { name: 'saved', label: '已保存方向', corner: true },
  { name: 'viewMgr', label: '视图管理器' },
  { name: 'persp', label: '透视图' },
  { name: 'section', label: '截面', corner: true },
  { name: 'datums', label: '基准显示过滤器', corner: true },
  { name: 'annot', label: '注释显示', on: true },
  { name: 'spin', label: '旋转中心', on: true },
  { name: 'styleDisp', label: '样式显示过滤器', corner: true },
  { name: 'quad', label: '显示所有视图' },
  { name: 'orient', label: '活动平面方向' },
  { name: 'quadOne', label: '显示下一个视图' },
  { name: 'symm', label: '对称' },
];

const Canvas = () => (
  <main className="relative min-w-0 flex-1 overflow-hidden bg-white">
    <svg viewBox="298 175 1050 800" className="absolute inset-0 h-full w-full" fill="none" shapeRendering="crispEdges" role="img" aria-label="PRT0001">
      <g fill="#f7f4f0">
        <path d="M510 300l521 33 76 506-521-33z" className="mix-blend-multiply" />
        <path d="M662 445l217-254 76 504-217 254z" className="mix-blend-multiply" />
        <path d="M656 425l521 33-216 256-522-32z" className="mix-blend-multiply" />
      </g>
      <g stroke={DATUM}>
        <path d="M510 300l521 33 76 506-521-33z" />
        <path d="M662 445l217-254 76 504-217 254z" />
        <path d="M652 421l535 34-222 263-535-33z" />
        <path d="M656 425l521 32-216 257-522-32z" />
        <path d="M597 487l535 33M541 553l535 33M485 619l535 33" />
        <path d="M786 430L564 693M919 438L697 702M1053 447L831 711" />
      </g>
      <path d="M657 484l56 1 106 2 115 2M607 566l378 24" stroke="#1d1a22" />
      <path d="M909 489l-6 20-18 74" stroke="#2fd04b" />
      <path d="M805 549l4 21" stroke="#33ff33" />
      <g shapeRendering="auto">
        <circle cx="805.5" cy="549" r="2.5" fill="#33ff33" />
        <circle cx="830" cy="571.5" r="2" fill="#f03c36" />
        <circle cx="799.5" cy="580.5" r="2.5" fill="#33f0f5" />
      </g>
      <path d="M655 441l8-9.5h6l12 1M706 432.5h-13l-4 1h4M693 434l6 1.5h4M645 444.5h15M642 447.5h8l4-3M649 448.5h8" stroke="#0a10f0" />
      <g fill={DATUM} fontFamily="Lato" fontWeight="300" fontSize="16" shapeRendering="auto">
        <text x="509" y="301">FRONT</text>
        <text x="1177" y="458">TOP</text>
        <text x="738" y="953">RIGHT</text>
      </g>
    </svg>
    <div className="relative mt-[7px] flex justify-center">
      <div className="flex h-8 items-center gap-0.5 border border-[#a3a7a9] bg-[#f8f9fc] px-[3px]">
        {viewTools.map((t) => (
          <Tool key={t.name} {...t} />
        ))}
      </div>
    </div>
  </main>
);

/* ---------- Status bar ---------- */

const StatusBar = () => (
  <footer className="flex h-[47px] shrink-0 items-center border-t border-[#b5c3c3] bg-[#f7fafc]">
    <div className="flex items-center gap-0.5 pt-3 pl-[5px]">
      <Tool name="panelEye" label="导航器" on />
      <Tool name="globe" label="浏览器" />
      <Tool name="blank" label="全屏" />
    </div>
    <span className="mt-3 mr-[3px] ml-2 h-6 w-px bg-[#b0b5b7]" />
    <div className="flex-1 overflow-hidden pt-0.5 text-[11px] leading-4 whitespace-nowrap">
      <p className="flex items-center gap-px">
        <svg viewBox="0 0 12 12" className="size-3" aria-hidden="true">
          <path d="M.5 4h5V.8l6 5.2-6 5.2V8h-5z" fill="#35a5d5" stroke="#0d4c6b" />
        </svg>
        单击可选择曲线。拖动点 (按 SHIFT 捕捉，按 ALT 垂直拖动，按 SHIFT+ALT 延伸)。单击切线端点 (按 ALT 等距拖动两个端点切线)。右键单击点、切线或曲线可调出弹出式菜单。
      </p>
      <p className="flex items-center gap-px">
        <svg viewBox="0 0 12 12" className="size-3" aria-hidden="true">
          <circle cx="6" cy="6" r="2.5" fill={BLUE} />
        </svg>
        选择 "样式" 几何或下一个工具。拖动选定的曲线进行移动 (按住 CTRL 进行复制)。单击鼠标中键可重复上次使用的工具。
      </p>
    </div>
    <div className="flex shrink-0 items-center pt-[14px]">
      <span className="mr-1 h-6 w-px bg-[#b0b5b7]" />
      <button type="button" aria-label="查找" className="flex h-6 items-center border border-[#b5b9bb] bg-[#eef0f1]">
        <span className="flex w-[29px] justify-center"><Icon name="binoc" /></span>
        <span className="flex h-full w-[13px] items-center justify-center border-l border-[#b5b9bb]"><Caret /></span>
      </button>
      <span className="ml-2 w-[93px]">选择了 1 项</span>
      <div className="relative mr-[19px] h-6 w-44 border border-[#b0b3b5]">
        <select aria-label="选择过滤器" className="h-full w-full appearance-none bg-[#f9fafb] px-[7px]">
          <option>样式</option>
        </select>
        <span className="pointer-events-none absolute inset-y-0 right-0 flex w-[15px] items-center justify-center border-l border-[#b0b3b5]">
          <Caret />
        </span>
      </div>
    </div>
  </footer>
);

const Speed = ({ up = false }: { up?: boolean }) => (
  <>
    <span className="mt-[3px] text-[11px]">0.1</span>
    <span className="flex items-center gap-1 text-[9px] leading-3 text-[#e2e4e5]">
      <svg viewBox="0 0 6 8" className={`h-2 w-1.5 ${up ? '' : 'rotate-180'}`} aria-hidden="true">
        <path d="M3 0l3 4H4v4H2V4H0z" fill={up ? '#1aa3ff' : '#0fbf5f'} />
      </svg>
      K/s
    </span>
  </>
);

/* Network speed widget docked to the screen edge */
const SpeedWidget = () => (
  <div className="absolute right-0 bottom-[26px] flex h-[142px] w-8 flex-col items-center rounded-tl-lg bg-[#a9acb0]/85 pt-[10px] leading-3 text-white shadow-lg">
    <span className="size-3 rounded-full border border-[#2a8fbf] bg-[#00bd66]" />
    <span className="mt-2.5 h-px w-6 bg-[#9fabae]" />
    <span className="mt-1.5 flex h-[30px] w-[10px] flex-col justify-end overflow-hidden rounded-full bg-[#bfc2c6]">
      <span className="h-3 bg-linear-to-b from-[#9cc83c] to-[#3cc4b4]" />
    </span>
    <span className="mt-2 mb-0.5 h-px w-6 bg-[#9fabae]" />
    <Speed up />
    <Speed />
  </div>
);

const Watermark = () => (
  <div className="pointer-events-none absolute right-[22px] bottom-2 w-[164px]">
    <p className="text-[41px] leading-[48px] font-light whitespace-nowrap text-black italic">
      <span className="text-[#ff6a32]">野火</span>论坛
    </p>
    <svg viewBox="0 0 20 44" className="absolute -top-4 left-[63px] h-11 w-5" aria-hidden="true">
      <path d="M5 0c10 8 16 20 11 31-3 6-7 8-10 12L1 39c6-5 8-9 8-15C9 18 5 14 2 9c5 3 8 7 10 12C13 13 10 6 5 0z" fill="#ff6a32" />
    </svg>
    <p className="-mt-1 pl-1 font-[Liberation_Sans] text-base leading-4 font-bold whitespace-nowrap text-[#a5a7a8] italic">www.proewildfire.cn</p>
  </div>
);

export default function App() {
  return (
    <div className="relative flex h-screen flex-col overflow-hidden bg-[#a3a3a3] p-1 font-['Noto_Sans','Noto_Sans_CJK_SC',sans-serif] text-xs text-[#4a4a4a]">
      <svg className="absolute size-0" aria-hidden="true">
        <linearGradient id="surfFill">
          <stop offset="0" stopColor="#9fdcf5" />
          <stop offset=".35" stopColor="#e9f8fe" />
          <stop offset="1" stopColor="#9fe2fb" />
        </linearGradient>
        <linearGradient id="blankFill" x2="0" y2="1">
          <stop offset="0" stopColor="#fff" />
          <stop offset="1" stopColor="#c9e2ee" />
        </linearGradient>
      </svg>
      <TitleBar />
      <TabBar />
      <Ribbon />
      <div className="flex min-h-0 flex-1">
        <Sidebar />
        <Canvas />
      </div>
      <StatusBar />
      <SpeedWidget />
      <Watermark />
    </div>
  );
}
